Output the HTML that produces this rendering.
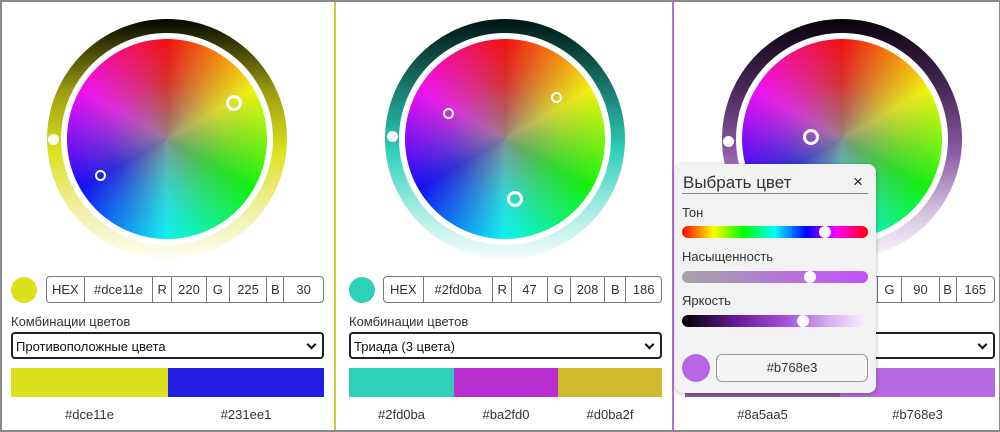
<!DOCTYPE html>
<html><head><meta charset="utf-8"><style>
*{box-sizing:border-box;margin:0;padding:0}
body{width:1000px;height:432px;overflow:hidden;background:#fff;font-family:"Liberation Sans",Arial,sans-serif;color:#333;position:relative}
.frame{position:absolute;left:0;top:0;width:1000px;height:432px;border:2px solid #8a8a8a;border-right:1px solid #8a8a8a}
.abs{position:absolute}
.ring{position:absolute;width:240px;height:240px;border-radius:50%}
.gap{position:absolute;width:212px;height:212px;border-radius:50%;background:#fff}
.wheel{position:absolute;width:200px;height:200px;border-radius:50%;background:radial-gradient(circle,rgba(140,140,140,0.9) 0%,rgba(140,140,140,0.35) 40%,rgba(140,140,140,0) 85%),conic-gradient(#f00,#ff0,#0f0,#0ff,#00f,#f0f,#f00)}
.dot{position:absolute;width:11px;height:11px;border-radius:50%;background:#fff}
.k{position:absolute;border-radius:50%;border:2.5px solid #fff}
.sw{position:absolute;width:26px;height:26px;border-radius:50%;top:277px}
.inp{position:absolute;top:276px;height:27px;border:1px solid #777;border-radius:4px;display:flex;font-size:13px;color:#333;background:#fff}
.inp span{border-right:1px solid #777;display:flex;align-items:center;justify-content:center;height:100%}
.inp span:last-child{border-right:none}
.lbl{position:absolute;top:314px;font-size:13px;color:#333}
.sel{position:absolute;top:332px;height:27px;border:2px solid #222;border-radius:4px;font-size:13px;color:#111;padding:5px 0 0 3px;background:#fff}
.sel:after{content:"";position:absolute;right:7px;top:7px;width:5px;height:5px;border-right:2px solid #111;border-bottom:2px solid #111;transform:rotate(45deg)}
.bar{position:absolute;top:368px;height:29px}
.hx{position:absolute;top:407px;font-size:13px;color:#333;text-align:center}
</style></head><body>

<!-- panel 1 -->
<div class="ring" style="left:47px;top:19px;background:linear-gradient(#050500,#9a9c10 30%,#dce11e 55%,#f0f0a8 80%,#fefef6)"></div>
<div class="gap" style="left:61px;top:33px"></div>
<div class="wheel" style="left:67px;top:39px"></div>
<div class="dot" style="left:48px;top:134px"></div>
<div class="k" style="left:226px;top:95px;width:16px;height:16px;border-width:3px"></div>
<div class="k" style="left:95px;top:170px;width:11px;height:11px;border-width:2px"></div>

<div class="sw" style="left:11px;background:#dce11e"></div>
<div class="inp" style="left:46px;width:278px">
<span style="width:38px">HEX</span><span style="width:69px">#dce11e</span><span style="width:19px">R</span><span style="width:35px">220</span><span style="width:23px">G</span><span style="width:38px">225</span><span style="width:17px">B</span><span style="width:39px">30</span></div>
<div class="lbl" style="left:11px">Комбинации цветов</div>
<div class="sel" style="left:11px;width:313px">Противоположные цвета</div>
<div class="bar" style="left:11px;width:157px;background:#dce11e"></div>
<div class="bar" style="left:168px;width:156px;background:#231ee1"></div>
<div class="hx" style="left:11px;width:157px">#dce11e</div>
<div class="hx" style="left:168px;width:156px">#231ee1</div>

<div class="abs" style="left:334px;top:0;width:2px;height:432px;background:#c8d040"></div>

<!-- panel 2 -->
<div class="ring" style="left:385px;top:19px;background:linear-gradient(#001411,#1a7d70 30%,#2fd0ba 55%,#a8ece2 80%,#f6fdfc)"></div>
<div class="gap" style="left:399px;top:33px"></div>
<div class="wheel" style="left:405px;top:39px"></div>
<div class="dot" style="left:387px;top:131px"></div>
<div class="k" style="left:443px;top:108px;width:11px;height:11px;border-width:2px"></div>
<div class="k" style="left:551px;top:92px;width:11px;height:11px;border-width:2px"></div>
<div class="k" style="left:507px;top:191px;width:16px;height:16px;border-width:3px"></div>

<div class="sw" style="left:349px;background:#2fd0ba"></div>
<div class="inp" style="left:383px;width:279px">
<span style="width:40px">HEX</span><span style="width:70px">#2fd0ba</span><span style="width:19px">R</span><span style="width:36px">47</span><span style="width:23px">G</span><span style="width:35px">208</span><span style="width:21px">B</span><span style="width:35px">186</span></div>
<div class="lbl" style="left:349px">Комбинации цветов</div>
<div class="sel" style="left:349px;width:313px">Триада (3 цвета)</div>
<div class="bar" style="left:349px;width:105px;background:#2fd0ba"></div>
<div class="bar" style="left:454px;width:104px;background:#ba2fd0"></div>
<div class="bar" style="left:558px;width:104px;background:#d0ba2f"></div>
<div class="hx" style="left:349px;width:105px">#2fd0ba</div>
<div class="hx" style="left:454px;width:104px">#ba2fd0</div>
<div class="hx" style="left:558px;width:104px">#d0ba2f</div>

<div class="abs" style="left:672px;top:0;width:2px;height:432px;background:#b070d8"></div>

<!-- panel 3 -->
<div class="ring" style="left:722px;top:19px;background:linear-gradient(#080209,#4a2a5a 30%,#8a5aa5 55%,#d2c0de 80%,#fbf8fd)"></div>
<div class="gap" style="left:736px;top:33px"></div>
<div class="wheel" style="left:742px;top:39px"></div>
<div class="dot" style="left:723px;top:136px"></div>
<div class="k" style="left:803px;top:129px;width:16px;height:16px;border-width:3px"></div>

<div class="inp" style="left:850px;width:145px">
<span style="width:27px"></span><span style="width:25px">G</span><span style="width:38px">90</span><span style="width:17px">B</span><span style="width:38px">165</span></div>
<div class="sel" style="left:685px;width:310px"></div>
<div class="bar" style="left:685px;width:155px;background:#8a5aa5"></div>
<div class="bar" style="left:840px;width:155px;background:#b768e3"></div>
<div class="hx" style="left:685px;width:155px">#8a5aa5</div>
<div class="hx" style="left:840px;width:155px">#b768e3</div>

<!-- popup -->
<div class="abs" style="left:675px;top:164px;width:201px;height:229px;background:#f2f2f2;border-radius:8px;box-shadow:0 1px 4px rgba(0,0,0,0.3)">
  <div class="abs" style="left:8px;top:9px;font-size:17px;color:#333">Выбрать цвет</div>
  <div class="abs" style="left:178px;top:8px;font-size:17px;color:#222">×</div>
  <div class="abs" style="left:7px;top:29px;width:186px;height:1px;background:#888"></div>
  <div class="abs" style="left:7px;top:41px;font-size:13px">Тон</div>
  <div class="abs" style="left:7px;top:62px;width:186px;height:12px;border-radius:6px;background:linear-gradient(90deg,#f00,#ff0 17%,#0f0 33%,#0ff 50%,#00f 67%,#f0f 83%,#f00)"></div>
  <div class="dot" style="left:144px;top:62px;width:12px;height:12px"></div>
  <div class="abs" style="left:7px;top:85px;font-size:13px">Насыщенность</div>
  <div class="abs" style="left:7px;top:107px;width:186px;height:12px;border-radius:6px;background:linear-gradient(90deg,#a5a5a5,#b768e3 70%,#c050f5)"></div>
  <div class="dot" style="left:129px;top:107px;width:12px;height:12px"></div>
  <div class="abs" style="left:7px;top:129px;font-size:13px">Яркость</div>
  <div class="abs" style="left:7px;top:151px;width:186px;height:12px;border-radius:6px;background:linear-gradient(90deg,#000,#6a1a9a 30%,#a050d8 55%,#d8b0f0 80%,#faf5fd)"></div>
  <div class="dot" style="left:122px;top:151px;width:12px;height:12px"></div>
  <div class="abs" style="left:7px;top:190px;width:28px;height:28px;border-radius:50%;background:#b768e3"></div>
  <div class="abs" style="left:41px;top:190px;width:152px;height:28px;border:1px solid #999;border-radius:6px;background:#f4f4f4;font-size:13px;text-align:center;line-height:26px">#b768e3</div>
</div>

<div class="frame"></div>
</body></html>
